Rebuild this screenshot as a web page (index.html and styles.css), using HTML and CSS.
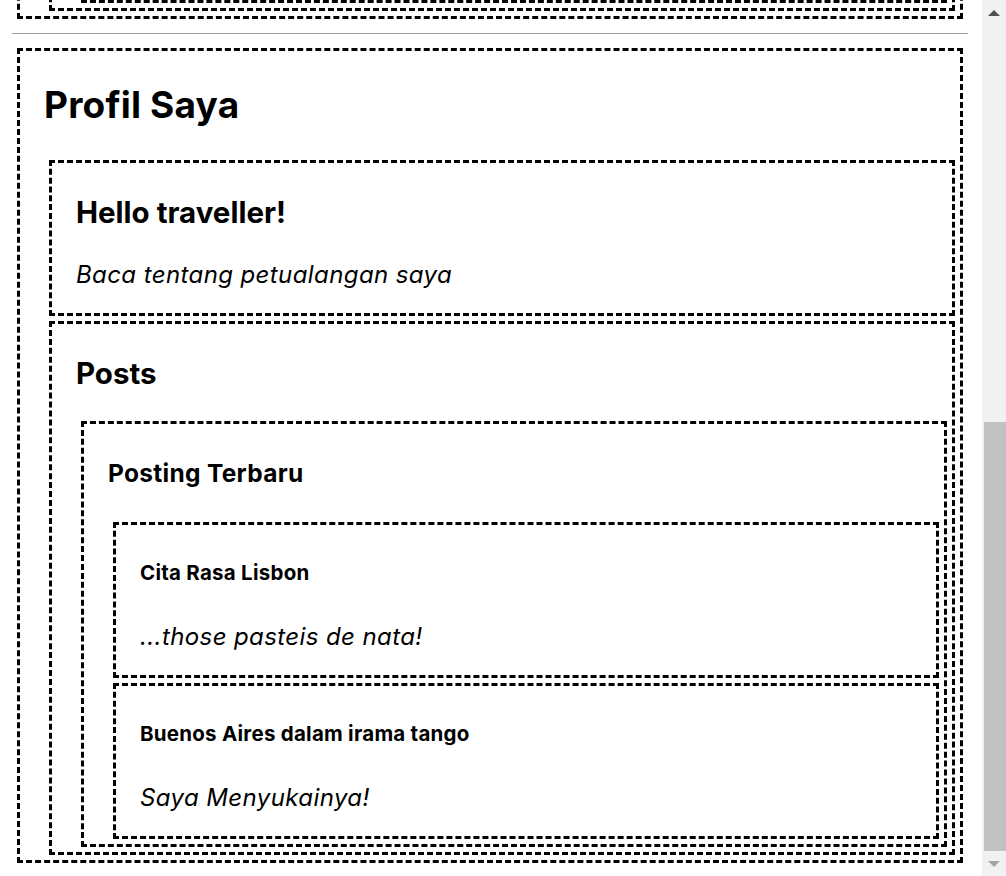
FILE: index.html
```html
<!DOCTYPE html>
<html>

<head>
    <meta charset="UTF-8">
    <title>Profil Saya</title>
    <link rel="stylesheet" href="styles.css">
</head>

<body>
    <div class="window">
        <div class="page">
            <div class="app">

                <!-- bagian atas, sudah lewat ke atas -->
                <section class="box">
                    <div class="box">
                        <div class="box filler"></div>
                    </div>
                </section>

                <hr class="divider">

                <section class="box">
                    <h1 class="title">Profil Saya</h1>

                    <div class="box">
                        <h2 class="heading">Hello traveller!</h2>
                        <p class="note">Baca tentang petualangan saya</p>
                    </div>

                    <div class="box">
                        <h2 class="heading">Posts</h2>

                        <div class="box">
                            <h3 class="subheading">Posting Terbaru</h3>

                            <div class="box">
                                <h4 class="post-title">Cita Rasa Lisbon</h4>
                                <p class="note">...those pasteis de nata!</p>
                            </div>

                            <div class="box">
                                <h4 class="post-title">Buenos Aires dalam irama tango</h4>
                                <p class="note">Saya Menyukainya!</p>
                            </div>
                        </div>
                    </div>
                </section>

            </div>
        </div>

        <div class="scrollbar">
            <div class="scroll-btn"><span class="arrow-up"></span></div>
            <div class="scroll-track">
                <div class="scroll-thumb"></div>
            </div>
            <div class="scroll-btn"><span class="arrow-down"></span></div>
        </div>
    </div>
</body>

</html>
```

FILE: styles.css
```css
body {
    margin: 0;
    overflow: hidden;
    font-family: Inter, "Liberation Sans", sans-serif;
    color: #000;
    background: #fff;
}

.window {
    display: flex;
    height: 100vh;
}

/* kolom halaman, ditampilkan dari bawah (seperti sudah di-scroll) */
.page {
    flex: 1;
    display: flex;
    flex-direction: column;
    justify-content: flex-end;
    overflow: hidden;
    padding: 0 14px 8px 12px;
}

.box {
    border: 3px dashed #000;
    margin: 5px;
    padding-left: 24px;
}

.filler {
    height: 160px;
}

.divider {
    border: 0;
    border-top: 1px solid #a0a0a0;
    height: 0;
    margin: 14px 0;
}

.title {
    font-size: 37px;
    line-height: 44px;
    letter-spacing: 0.2px;
    margin: 32px 0 33px;
}

.heading {
    font-size: 29.5px;
    margin: 31px 0 30px;
}

.subheading {
    font-size: 24.5px;
    letter-spacing: 0.3px;
    margin: 34px 0 34px;
}

.post-title {
    font-size: 20.5px;
    letter-spacing: 0.25px;
    margin: 35px 0 37px;
}

.note {
    font-size: 24px;
    font-style: italic;
    letter-spacing: 0.4px;
    margin: 24px 0;
}

/* scrollbar */
.scrollbar {
    width: 24px;
    background: #f1f1f1;
    display: flex;
    flex-direction: column;
}

.scroll-btn {
    height: 25px;
    display: flex;
    align-items: center;
    justify-content: center;
}

.arrow-up {
    border-left: 6px solid transparent;
    border-right: 6px solid transparent;
    border-bottom: 6px solid #505050;
}

.arrow-down {
    border-left: 6px solid transparent;
    border-right: 6px solid transparent;
    border-top: 6px solid #a3a3a3;
}

.scroll-track {
    flex: 1;
    display: flex;
    flex-direction: column;
    justify-content: flex-end;
}

.scroll-thumb {
    height: 429px;
    margin-left: 2px;
    background: #c1c1c1;
}
```
